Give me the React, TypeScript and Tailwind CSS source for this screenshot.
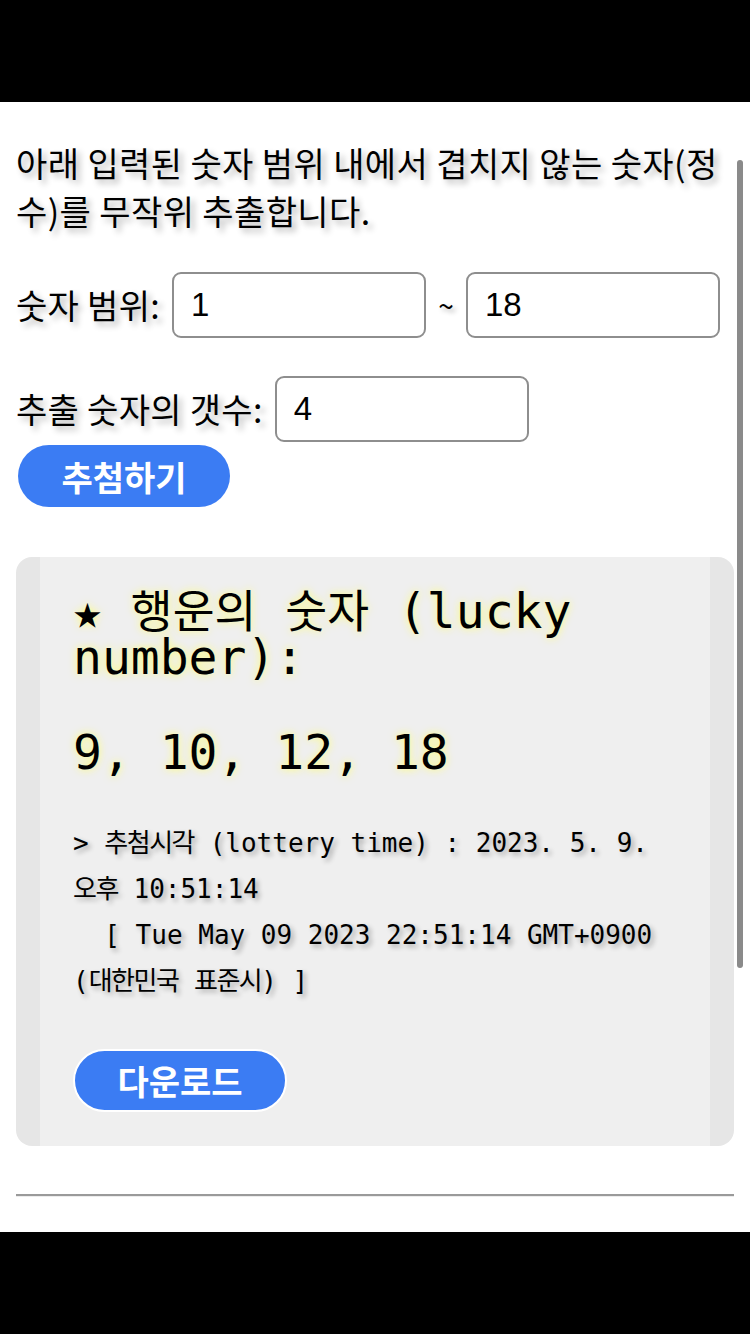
import React from "react";

const KR = { fontFamily: '"Noto Sans CJK KR", "Noto Sans", sans-serif' };
const MONO = { fontFamily: '"DejaVu Sans Mono", "Noto Sans CJK KR", monospace' };
const NUM = { fontFamily: '"Liberation Sans", "Noto Sans CJK KR", sans-serif' };

function H({ children }: { children: React.ReactNode }) {
  return <span className="text-[45.5px]">{children}</span>;
}
function HS({ children }: { children: React.ReactNode }) {
  return <span className="tracking-[-1.5px]">{children}</span>;
}

export default function App() {
  return (
    <div className="relative w-[750px] h-[1334px] flex flex-col bg-white overflow-hidden text-black">
      <div className="h-[102px] shrink-0 bg-black" />
      <div className="flex-1 px-4 pt-[37px] flex flex-col">
        <p
          className="text-[34px] leading-[48px] tracking-[0.4px] [text-shadow:4px_4px_6px_rgba(0,0,0,0.3)]"
          style={KR}
        >
          <span className="block whitespace-nowrap">아래 입력된 숫자 범위 내에서 겹치지 않는 숫자(정</span>
          <span className="block whitespace-nowrap">수)를 무작위 추출합니다.</span>
        </p>

        <div className="mt-[37px] flex items-center gap-[12px]">
          <span className="text-[34px] leading-none tracking-[0.3px] [text-shadow:4px_4px_6px_rgba(0,0,0,0.3)]" style={KR}>
            숫자 범위:
          </span>
          <div className="w-[254px] h-[66px] rounded-[9px] border-2 border-[#8e8e8e] flex items-center pl-[17px] text-[33px]" style={NUM}>
            1
          </div>
          <span className="w-[16px] text-center text-[28px] [text-shadow:3px_3px_5px_rgba(0,0,0,0.3)]" style={KR}>
            ~
          </span>
          <div className="w-[254px] h-[66px] rounded-[9px] border-2 border-[#8e8e8e] flex items-center pl-[17px] text-[33px]" style={NUM}>
            18
          </div>
        </div>

        <div className="mt-[38px] flex items-center gap-[12px]">
          <span className="text-[34px] leading-none tracking-[0.3px] [text-shadow:4px_4px_6px_rgba(0,0,0,0.3)]" style={KR}>
            추출 숫자의 갯수:
          </span>
          <div className="w-[254px] h-[66px] rounded-[9px] border-2 border-[#8e8e8e] flex items-center pl-[17px] text-[33px]" style={NUM}>
            4
          </div>
        </div>

        <div
          className="mt-[3px] ml-[2px] w-[212px] h-[62px] rounded-full bg-[#3b7cf3] flex items-center justify-center text-white font-bold text-[34px]"
          style={KR}
        >
          추첨하기
        </div>

        <div className="mt-[50px] rounded-2xl bg-[#efefef] border-x-[24px] border-[#e6e6e6] pl-[33px] pr-[10px] pt-[32px] pb-[34px]">
          <div className="text-[48px] leading-[45px] [text-shadow:0_0_8px_#ffff70]" style={MONO}>
            ★ <H>행운의</H> <H>숫자</H> (lucky number):
          </div>
          <div className="mt-[45px] text-[48px] leading-[54px] [text-shadow:0_0_8px_#ffff70]" style={MONO}>
            9, 10, 12, 18
          </div>
          <div className="mt-[41px] text-[26px] leading-[46px] [text-shadow:3px_3px_5px_rgba(0,0,0,0.3)]" style={MONO}>
            <div className="whitespace-pre">&gt; <HS>추첨시각</HS> (lottery time) : 2023. 5. 9.</div>
            <div className="whitespace-pre"><HS>오후</HS> 10:51:14</div>
            <div className="whitespace-pre">  [ Tue May 09 2023 22:51:14 GMT+0900</div>
            <div className="whitespace-pre">(<HS>대한민국</HS> <HS>표준시</HS>) ]</div>
          </div>
          <div
            className="mt-[45px] w-[214px] h-[63px] rounded-full bg-[#3b7cf3] border-2 border-white flex items-center justify-center text-white font-bold text-[34px]"
            style={KR}
          >
            다운로드
          </div>
        </div>

        <div className="mt-[48px] border-t-2 border-b border-t-[#9a9a9a] border-b-[#ececec]" />
      </div>
      <div className="h-[102px] shrink-0 bg-black" />

      <div className="absolute left-[737px] top-[160px] w-[6px] h-[808px] rounded-full bg-[#8a8a8a]" />
    </div>
  );
}
